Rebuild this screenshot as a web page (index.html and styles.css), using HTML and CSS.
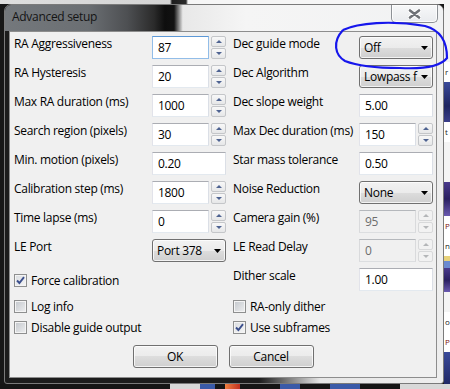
FILE: index.html
```html
<!DOCTYPE html>
<html>
<head>
<meta charset="utf-8">
<link rel="stylesheet" href="styles.css">
</head>
<body>
<div class="desktop">

    <!-- what shows through on the right: a web page behind the dialog -->
    <div class="site">
        <div class="blk" style="height:62px"></div>
        <div class="txt">r</div>
        <div class="img navy" style="height:40px"></div>
        <div class="txt">t</div>
        <div class="blk" style="height:40px"></div>
        <div class="img violet" style="height:34px"></div>
        <div class="txt red">P</div>
        <div class="txt">n</div>
        <div class="img stripe" style="height:12px"></div>
        <div class="img violet" style="height:24px"></div>
        <div class="blk" style="height:20px"></div>
        <div class="txt">o</div>
        <div class="txt red">P</div>
        <div class="img navy" style="height:60px"></div>
    </div>
    <div class="taskbar">
        <i style="width:170px"></i>
        <i class="lt" style="width:30px"></i>
        <i class="bl" style="width:15px"></i>
        <i style="width:10px"></i>
        <i class="or" style="width:15px"></i>
        <i style="width:40px"></i>
        <i class="bl" style="width:20px"></i>
        <i style="width:30px"></i>
        <i class="bl" style="width:30px"></i>
        <i style="width:40px"></i>
        <i class="lt" style="width:50px"></i>
    </div>

    <div class="window">
        <div class="titlebar">
            <span class="title">Advanced setup</span>
            <div class="close">
                <svg width="13" height="10" viewBox="0 0 13 10">
                    <path d="M2 1.5 L11 8.5 M11 1.5 L2 8.5" stroke="#ffffff" stroke-width="4.6" stroke-linecap="round"/>
                    <path d="M2 1.5 L11 8.5 M11 1.5 L2 8.5" stroke="#6f7277" stroke-width="2.6" stroke-linecap="round"/>
                </svg>
            </div>
        </div>

        <div class="client">
            <div class="form">
                <span class="lbl">RA Aggressiveness</span>
                <div class="spin">
                    <input class="tb focus" type="text" value="87">
                    <span class="arrows"><b class="up"></b><b class="dn"></b></span>
                </div>
                <span class="lbl r">Dec guide mode</span>
                <div class="combo">
                    <span>Off</span>
                    <svg width="7" height="4"><polygon points="0,0 7,0 3.5,4" fill="#000"/></svg>
                </div>

                <span class="lbl">RA Hysteresis</span>
                <div class="spin">
                    <input class="tb" type="text" value="20">
                    <span class="arrows"><b class="up"></b><b class="dn"></b></span>
                </div>
                <span class="lbl r">Dec Algorithm</span>
                <div class="combo">
                    <span>Lowpass f</span>
                    <svg width="7" height="4"><polygon points="0,0 7,0 3.5,4" fill="#000"/></svg>
                </div>

                <span class="lbl">Max RA duration (ms)</span>
                <div class="spin">
                    <input class="tb" type="text" value="1000">
                    <span class="arrows"><b class="up"></b><b class="dn"></b></span>
                </div>
                <span class="lbl r">Dec slope weight</span>
                <input class="tb wide" type="text" value="5.00">

                <span class="lbl">Search region (pixels)</span>
                <div class="spin">
                    <input class="tb" type="text" value="30">
                    <span class="arrows"><b class="up"></b><b class="dn"></b></span>
                </div>
                <span class="lbl r">Max Dec duration (ms)</span>
                <div class="spin">
                    <input class="tb" type="text" value="150">
                    <span class="arrows"><b class="up"></b><b class="dn"></b></span>
                </div>

                <span class="lbl">Min. motion (pixels)</span>
                <input class="tb wide" type="text" value="0.20">
                <span class="lbl r">Star mass tolerance</span>
                <input class="tb wide" type="text" value="0.50">

                <span class="lbl">Calibration step (ms)</span>
                <div class="spin">
                    <input class="tb" type="text" value="1800">
                    <span class="arrows"><b class="up"></b><b class="dn"></b></span>
                </div>
                <span class="lbl r">Noise Reduction</span>
                <div class="combo">
                    <span>None</span>
                    <svg width="7" height="4"><polygon points="0,0 7,0 3.5,4" fill="#000"/></svg>
                </div>

                <span class="lbl">Time lapse (ms)</span>
                <div class="spin">
                    <input class="tb" type="text" value="0">
                    <span class="arrows"><b class="up"></b><b class="dn"></b></span>
                </div>
                <span class="lbl r">Camera gain (%)</span>
                <div class="spin off">
                    <input class="tb" type="text" value="95" disabled>
                    <span class="arrows"><b class="up"></b><b class="dn"></b></span>
                </div>

                <span class="lbl">LE Port</span>
                <div class="combo">
                    <span>Port 378</span>
                    <svg width="7" height="4"><polygon points="0,0 7,0 3.5,4" fill="#000"/></svg>
                </div>
                <span class="lbl r">LE Read Delay</span>
                <div class="spin off">
                    <input class="tb" type="text" value="0" disabled>
                    <span class="arrows"><b class="up"></b><b class="dn"></b></span>
                </div>

                <label class="check first">
                    <span class="cb on"><svg width="9" height="9" viewBox="0 0 9 9"><path d="M1 4.5 L3.4 7 L8 1.2" fill="none" stroke="#3b4f8c" stroke-width="1.9"/></svg></span>
                    Force calibration
                </label>
                <span class="lbl r">Dither scale</span>
                <input class="tb wide" type="text" value="1.00">
            </div>

            <div class="checks">
                <label class="check"><span class="cb"></span>Log info</label>
                <label class="check"><span class="cb"></span>RA-only dither</label>
                <label class="check"><span class="cb"></span>Disable guide output</label>
                <label class="check">
                    <span class="cb on"><svg width="9" height="9" viewBox="0 0 9 9"><path d="M1 4.5 L3.4 7 L8 1.2" fill="none" stroke="#3b4f8c" stroke-width="1.9"/></svg></span>
                    Use subframes
                </label>
            </div>

            <div class="buttons">
                <button class="btn">OK</button>
                <button class="btn">Cancel</button>
            </div>
        </div>
    </div>

    <!-- hand drawn marker ring round the Dec guide mode box -->
    <svg class="scribble" width="450" height="389">
        <path d="M343 30 C358 23 390 20 425 26 C440 30 447 42 447 58 C440 67 420 69 400 68 C380 68 360 67 345 61 C335 55 332 42 343 30"
              fill="none" stroke="#1616ec" stroke-width="2.2"/>
    </svg>
</div>
</body>
</html>
```

FILE: styles.css
```css
* {
    box-sizing: border-box;
}

body {
    margin: 0;
    background: #161616;
    font-family: "Open Sans", "Noto Sans", sans-serif;
    font-size: 12px;
    letter-spacing: -0.3px;
    color: #000;
}

.desktop {
    position: relative;
    width: 450px;
    height: 389px;
    overflow: hidden;
    padding: 4px 0 0 4px;
    background:
        linear-gradient(to right, #dedede 0, #d4d4d4 170px, #1e1e1e 172px, #2a2a2a 186px, #f6f6f6 188px) top left / 100% 4px no-repeat,
        #171717;
}

/* background pieces */
.site {
    position: absolute;
    left: 444px;
    top: 0;
    width: 6px;
    height: 389px;
    background: #f7f7f7;
    overflow: hidden;
}

.site .blk {
    background: #f4f4f4;
}

.site .txt {
    height: 20px;
    line-height: 20px;
    padding-left: 1px;
    font-size: 8px;
    letter-spacing: 0;
    color: #222;
    background: #fff;
}

.site .red {
    color: #7a1010;
}

.site .img.navy {
    background: linear-gradient(#3a4a9a, #1e2560 60%, #3b3f8a);
}

.site .img.violet {
    background: linear-gradient(#4a3a8c, #2a2060 50%, #6a5ab0);
}

.site .img.stripe {
    background: linear-gradient(#e8d27a 0 40%, #6a8ad0 40%);
}

.taskbar {
    position: absolute;
    left: 0;
    top: 384px;
    width: 450px;
    height: 5px;
    display: flex;
}

.taskbar i {
    background: #151515;
}

.taskbar i.lt {
    background: #d8d8d8;
}

.taskbar i.bl {
    background: #3a5aa8;
}

.taskbar i.or {
    background: linear-gradient(to right, #f08040, #c03020);
}

/* the dialog */
.window {
    position: relative;
    width: 440px;
    height: 380px;
    border: 1px solid #7a7a7a;
    border-radius: 7px 7px 3px 3px;
    background: linear-gradient(to right, #1c1c1c 0, #1c1c1c 58%, #e6e6e6 72%, #eeeeee 100%);
    display: flex;
    flex-direction: column;
}

.titlebar {
    height: 26px;
    display: flex;
    align-items: flex-start;
    border-radius: 6px 6px 0 0;
    background: linear-gradient(to right, #74787c 0, #6b6f73 19%, #4d4f52 28%, #2b2b2b 34%, #0e0e0e 36.5%, #121212 38.6%, #e8e8e8 40.6%, #f5f5f5 55%, #f1f2f3 100%);
}

.title {
    margin: 4px 0 0 7px;
    line-height: 16px;
    color: #141414;
}

.close {
    margin-left: auto;
    margin-right: 5px;
    width: 47px;
    height: 18px;
    border: 1px solid #8d9196;
    border-top: none;
    border-radius: 0 0 5px 5px;
    background: linear-gradient(#f7f8f9, #e9ebee);
    box-shadow: inset 0 0 0 1px rgba(255, 255, 255, 0.8);
    display: flex;
    align-items: center;
    justify-content: center;
    padding-top: 1px;
}

.client {
    margin: 0 6px 0 4px;
    height: 347px;
    border: 1px solid #8d8d8d;
    background: #f0f0f0;
    padding-top: 4px;
}

.form {
    margin-left: 4px;
    display: grid;
    grid-template-columns: 138px 74px 133px 74px;
    grid-auto-rows: 23px;
    row-gap: 6px;
}

.lbl {
    line-height: 16px;
    white-space: nowrap;
}

.r {
    padding-left: 7px;
}

/* text boxes */
.tb {
    width: 57px;
    height: 23px;
    margin: 0;
    padding: 0 5px;
    border: 1px solid;
    border-color: #abadb3 #dbdfe6 #e3e9ef #e2e3ea;
    background: #fff;
    font: inherit;
    letter-spacing: inherit;
    color: #000;
    outline: none;
}

.tb.wide {
    width: 74px;
}

.tb.focus {
    border-color: #5c98d6 #92bde8 #92bde8 #92bde8;
}

.tb:disabled {
    background: #f0f0f0;
    color: #6d6d6d;
    border-color: #b5b8bc #d9dadc #dcdee0 #d9dadc;
}

.spin {
    display: flex;
    gap: 2px;
}

.arrows {
    width: 15px;
    display: flex;
    flex-direction: column;
    gap: 1px;
}

.arrows b {
    height: 11px;
    border: 1px solid #c4c6c9;
    border-radius: 2px;
    background: linear-gradient(#f8f8f8, #e6e7e8);
    display: flex;
    align-items: center;
    justify-content: center;
}

.arrows b::after {
    content: "";
    border-left: 3px solid transparent;
    border-right: 3px solid transparent;
}

.arrows .up::after {
    border-bottom: 3px solid #4e6391;
}

.arrows .dn::after {
    border-top: 3px solid #4e6391;
}

.spin.off .arrows b {
    border-color: #d8d9da;
    background: #f2f2f2;
}

.spin.off .arrows .up::after {
    border-bottom-color: #b4b6b8;
}

.spin.off .arrows .dn::after {
    border-top-color: #b4b6b8;
}

/* drop down lists */
.combo {
    width: 74px;
    height: 23px;
    display: flex;
    align-items: center;
    gap: 4px;
    padding: 0 4px;
    border: 1px solid #707070;
    border-radius: 3px;
    background: linear-gradient(#f2f2f2 0, #ebebeb 50%, #dddddd 50%, #cfcfcf 100%);
    box-shadow: inset 0 0 0 1px rgba(255, 255, 255, 0.75);
}

.combo span {
    flex: 1;
    white-space: nowrap;
}

/* check boxes */
.checks {
    margin: 5px 0 0 4px;
    display: grid;
    grid-template-columns: 219px 207px;
    grid-auto-rows: 21px;
}

.check {
    display: flex;
    align-items: center;
    gap: 4px;
    line-height: 16px;
    white-space: nowrap;
}

.check.first {
    grid-column: 1 / span 2;
    height: 21px;
    margin-top: 2px;
}

.cb {
    width: 13px;
    height: 13px;
    flex: none;
    border: 1px solid #8e8f8f;
    background: linear-gradient(135deg, #c3c7cc, #eeeff0);
    box-shadow: inset 0 0 0 1px #f4f4f4;
    display: flex;
    align-items: center;
    justify-content: center;
}

.cb.on {
    background: linear-gradient(135deg, #d9dce0, #f6f6f6);
}

/* OK / Cancel */
.buttons {
    margin-top: 7px;
    display: flex;
    justify-content: center;
    gap: 11px;
}

.btn {
    width: 85px;
    height: 23px;
    padding: 0;
    border: 1px solid #707070;
    border-radius: 3px;
    background: linear-gradient(#f2f2f2 0, #ebebeb 50%, #dddddd 50%, #cfcfcf 100%);
    box-shadow: inset 0 0 0 1px rgba(255, 255, 255, 0.75);
    font: inherit;
    letter-spacing: inherit;
    color: #000;
}

.scribble {
    position: absolute;
    left: 0;
    top: 0;
    pointer-events: none;
}
```
